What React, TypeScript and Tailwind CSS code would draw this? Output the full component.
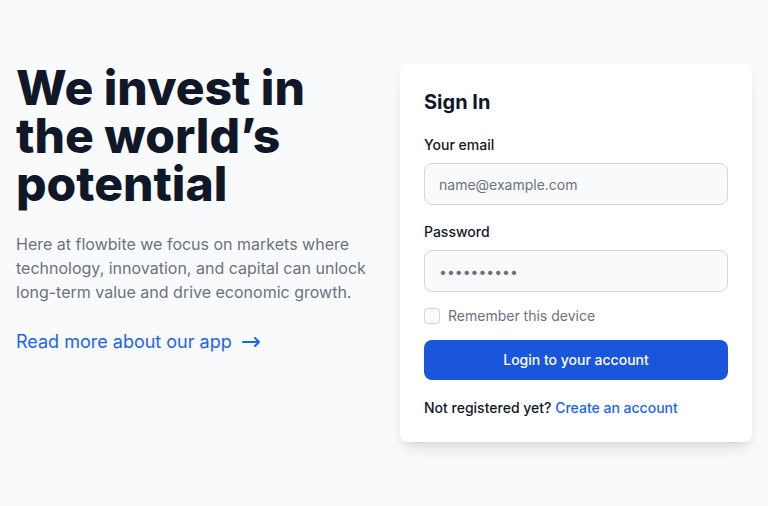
export default function App() {
    return (
        <main
            className="min-h-screen bg-gray-50 text-gray-900"
            style={{ fontFamily: 'Inter, "Noto Sans", sans-serif' }}
        >
            <div className="grid grid-cols-2 gap-8 px-4 py-16">
                {/* LEFT: HERO TEXT */}
                <div>
                    <h1 className="mb-6 text-5xl font-extrabold leading-none text-gray-900">
                        We invest in the world’s potential
                    </h1>
                    <p className="mb-6 text-base leading-6 text-gray-500">
                        Here at flowbite we focus on markets where technology, innovation, and
                        capital can unlock long-term value and drive economic growth.
                    </p>
                    <a
                        href="#"
                        className="inline-flex items-center text-lg leading-7 text-[#1c64f2] hover:underline"
                    >
                        Read more about our app
                        <svg
                            className="ms-2.5 h-[10px] w-[18px]"
                            viewBox="0 0 18 10"
                            fill="none"
                            stroke="currentColor"
                            strokeWidth="2"
                            strokeLinecap="round"
                            strokeLinejoin="round"
                        >
                            <path d="M1 5h16m0 0l-4-4m4 4l-4 4" />
                        </svg>
                    </a>
                </div>

                {/* RIGHT: SIGN IN CARD */}
                <div className="rounded-lg bg-white p-6 shadow-lg">
                    <h2 className="text-xl font-bold leading-7 text-gray-900">Sign In</h2>
                    <form className="mt-[19px]">
                        <label htmlFor="email" className="mb-2 block text-sm font-medium leading-5">
                            Your email
                        </label>
                        <input
                            id="email"
                            type="email"
                            placeholder="name@example.com"
                            className="block h-[42px] w-full rounded-lg border border-gray-300 bg-gray-50 px-3.5 text-sm text-gray-900 placeholder:text-gray-500 outline-none"
                        />
                        <label
                            htmlFor="password"
                            className="mb-2 mt-[17px] block text-sm font-medium leading-5"
                        >
                            Password
                        </label>
                        <input
                            id="password"
                            type="password"
                            placeholder="••••••••••"
                            className="block h-[42px] w-full rounded-lg border border-gray-300 bg-gray-50 px-3.5 text-sm text-gray-900 placeholder:text-gray-500 outline-none"
                        />
                        <div className="mt-3.5 flex h-5 items-center">
                            <input
                                id="remember"
                                type="checkbox"
                                className="h-4 w-4 appearance-none rounded border border-gray-300 bg-gray-50"
                            />
                            <label htmlFor="remember" className="ms-2 text-sm leading-5 text-gray-500">
                                Remember this device
                            </label>
                        </div>
                        <button
                            type="button"
                            className="mt-3.5 h-10 w-full rounded-lg bg-[#1a56db] text-sm font-medium text-white"
                        >
                            Login to your account
                        </button>
                        <div className="mt-[18px] text-sm font-medium leading-5 text-gray-900">
                            Not registered yet?{' '}
                            <a href="#" className="text-[#1c64f2] hover:underline">
                                Create an account
                            </a>
                        </div>
                    </form>
                </div>
            </div>
        </main>
    );
}
